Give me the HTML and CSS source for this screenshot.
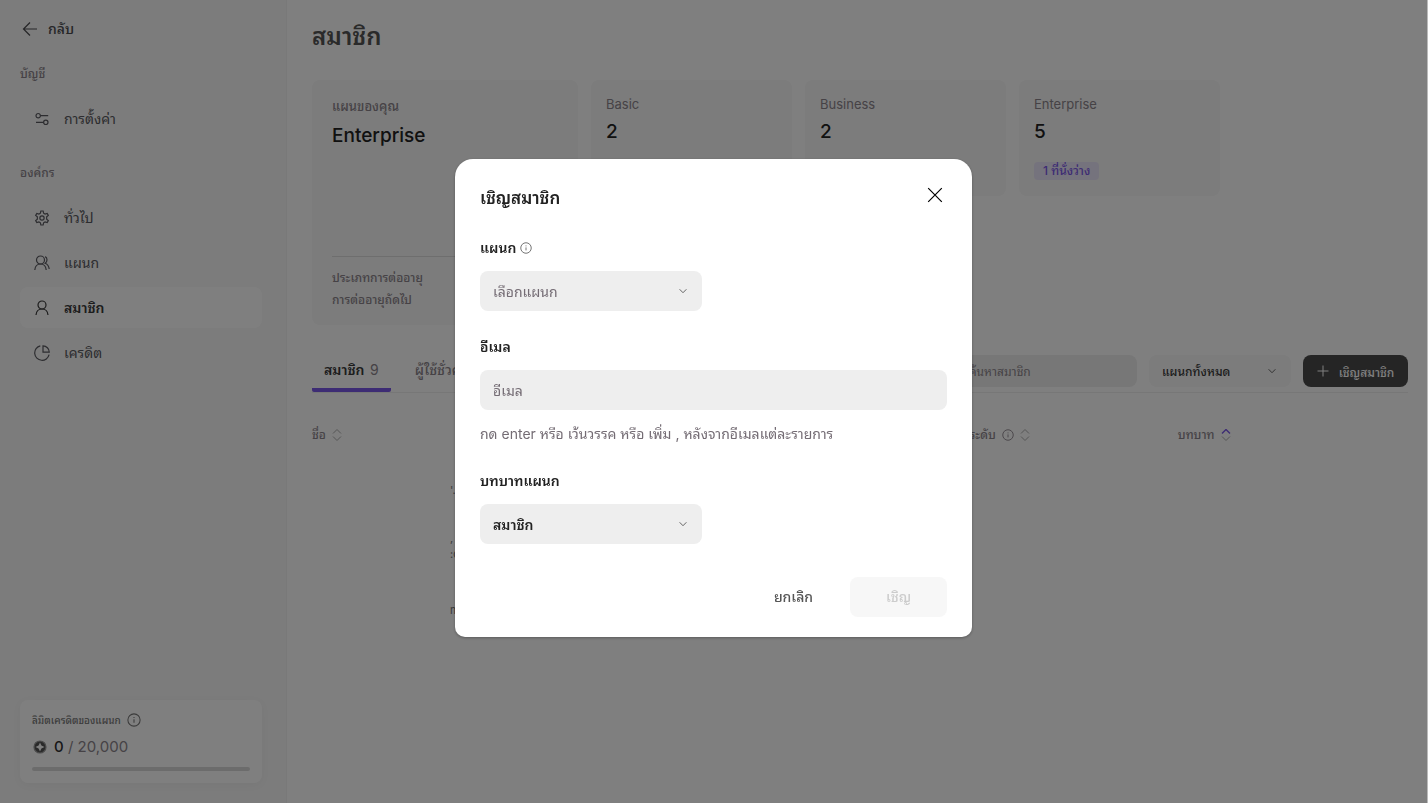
FILE: index.html
```html
<!DOCTYPE html>
<html lang="th">
<head>
<meta charset="utf-8">
<meta name="viewport" content="width=device-width, initial-scale=1">
<title>สมาชิก</title>
<link rel="stylesheet" href="styles.css">
</head>
<body>
<svg class="defs" aria-hidden="true">
  <symbol id="info" viewBox="0 0 16 16"><circle cx="8" cy="8" r="7"/><path d="M8 7.2v4M8 4.6v1.2"/></symbol>
  <symbol id="chevron" viewBox="0 0 16 16"><path d="M3.500 5.700l4.500 4.600 4.500-4.600"/></symbol>
</svg>

<div class="app">
  <aside class="sidebar">
    <a class="back" href="#">
      <svg class="icon-back" viewBox="0 0 16 16"><path d="M15 8H1.500M8 1.500L1.500 8 8 14.500"/></svg>
      <span>กลับ</span>
    </a>
    <h2 class="group-label">บัญชี</h2>
    <nav class="nav">
      <a class="nav-item" href="#">
        <svg class="icon" viewBox="0 0 16 16"><circle cx="4.200" cy="4.700" r="2.200"/><path d="M6.400 4.700H14.200M2 11.300h7.400"/><circle cx="11.800" cy="11.300" r="2.200"/></svg>
        <span>การตั้งค่า</span>
      </a>
    </nav>
    <h2 class="group-label">องค์กร</h2>
    <nav class="nav">
      <a class="nav-item" href="#">
        <svg class="icon icon-gear" viewBox="0 0 24 24"><circle cx="12" cy="12" r="3.200"/><path d="M10.300 1.500h3.400l.7 3.300 2.200 1.250 3.200-1 1.700 2.950-2.500 2.250v3.500l2.500 2.250-1.700 2.950-3.200-1-2.200 1.250-.7 3.300h-3.400l-.7-3.300-2.200-1.250-3.200 1-1.700-2.950 2.500-2.250v-3.500l-2.500-2.250 1.700-2.950 3.200 1 2.200-1.250z"/></svg>
        <span>ทั่วไป</span>
      </a>
      <a class="nav-item" href="#">
        <svg class="icon" viewBox="0 0 16 16"><circle cx="6.500" cy="5" r="4"/><path d="M.8 15c.3-3.500 2.600-6 5.700-6s5.400 2.500 5.700 6M11.200 1.600c2.400 1.200 2.400 5.200 0 6.600 2.300 1 3.700 3 4 5.800"/></svg>
        <span>แผนก</span>
      </a>
      <a class="nav-item active" href="#">
        <svg class="icon" viewBox="0 0 16 16"><circle cx="8" cy="5" r="4"/><path d="M2 15c.3-3.500 2.700-6 6-6s5.700 2.500 6 6"/></svg>
        <span>สมาชิก</span>
      </a>
      <a class="nav-item" href="#">
        <svg class="icon" viewBox="0 0 16 16"><path d="M6.300.9a7.300 7.300 0 1 0 8.800 8.800M9 .8v6.400h6.300A6.600 6.600 0 0 0 9 .8z"/></svg>
        <span>เครดิต</span>
      </a>
    </nav>
    <section class="credit">
      <div class="credit-title">ลิมิตเครดิตของแผนก <svg class="icon-info" viewBox="0 0 16 16"><use href="#info"/></svg></div>
      <div class="credit-value">
        <svg class="coin" viewBox="0 0 14 14"><circle cx="7" cy="7" r="6"/><path d="M7 2.500l1.400 3.100 3.100 1.400-3.100 1.400-1.400 3.100-1.400-3.100-3.100-1.400 3.100-1.400z"/></svg>
        <span><strong>0</strong> / 20,000</span>
      </div>
      <div class="track"></div>
    </section>
  </aside>

  <main class="main">
    <h1 class="title">สมาชิก</h1>
    <div class="cards">
      <section class="card plan">
        <p class="card-label">แผนของคุณ</p>
        <p class="card-value">Enterprise</p>
        <div class="renewal"><p>ประเภทการต่ออายุ</p><p>การต่ออายุถัดไป</p></div>
      </section>
      <section class="card"><p class="card-label">Basic</p><p class="card-value">2</p></section>
      <section class="card"><p class="card-label">Business</p><p class="card-value">2</p></section>
      <section class="card"><p class="card-label">Enterprise</p><p class="card-value">5</p><span class="badge">1 ที่นั่งว่าง</span></section>
    </div>

    <div class="toolbar">
      <div class="tabs">
        <button class="tab selected" type="button">สมาชิก <span>9</span></button>
        <button class="tab" type="button">ผู้ใช้ชั่วคราว</button>
      </div>
      <div class="tools">
        <input class="search" type="search" placeholder="ค้นหาสมาชิก" aria-label="ค้นหาสมาชิก">
        <div class="select-box filter">
          <select aria-label="แผนก"><option>แผนกทั้งหมด</option></select>
          <svg class="chevron" viewBox="0 0 16 16"><use href="#chevron"/></svg>
        </div>
        <button class="invite" type="button"><svg class="icon-plus" viewBox="0 0 12 12"><path d="M6 .5v11M.5 6h11"/></svg>เชิญสมาชิก</button>
      </div>
    </div>

    <table class="members">
      <thead>
        <tr>
          <th class="col-name"><span class="th">ชื่อ <svg class="sort" viewBox="0 0 10 12"><path d="M1 4.500l4-4 4 4M1 7.500l4 4 4-4"/></svg></span></th>
          <th class="col-tier"><span class="th">ระดับ <svg class="th-info" viewBox="0 0 16 16"><use href="#info"/></svg> <svg class="sort" viewBox="0 0 10 12"><path d="M1 4.500l4-4 4 4M1 7.500l4 4 4-4"/></svg></span></th>
          <th><span class="th">บทบาท <svg class="sort" viewBox="0 0 10 12"><path class="on" d="M1 4.500l4-4 4 4"/><path d="M1 7.500l4 4 4-4"/></svg></span></th>
        </tr>
      </thead>
      <tbody>
        <tr><td>'.</td><td></td><td></td></tr>
        <tr><td>,<br>:c</td><td></td><td></td></tr>
        <tr><td><br>m</td><td></td><td></td></tr>
      </tbody>
    </table>
  </main>
</div>

<div class="overlay">
  <form class="dialog" role="dialog" aria-modal="true" aria-labelledby="dialog-title">
    <header class="dialog-head">
      <h2 id="dialog-title">เชิญสมาชิก</h2>
      <button class="close" type="button" aria-label="ปิด"><svg viewBox="0 0 16 16"><path d="M1.200 1.200l13.600 13.600M14.800 1.200L1.200 14.800"/></svg></button>
    </header>
    <div class="field">
      <label for="dept">แผนก <svg class="label-info" viewBox="0 0 16 16"><use href="#info"/></svg></label>
      <div class="select-box half placeholder">
        <select id="dept"><option>เลือกแผนก</option></select>
        <svg class="chevron" viewBox="0 0 16 16"><use href="#chevron"/></svg>
      </div>
    </div>
    <div class="field">
      <label for="email">อีเมล</label>
      <input id="email" type="text" placeholder="อีเมล">
      <p class="hint">กด enter หรือ เว้นวรรค หรือ เพิ่ม , หลังจากอีเมลแต่ละรายการ</p>
    </div>
    <div class="field">
      <label for="role">บทบาทแผนก</label>
      <div class="select-box half">
        <select id="role"><option>สมาชิก</option></select>
        <svg class="chevron" viewBox="0 0 16 16"><use href="#chevron"/></svg>
      </div>
    </div>
    <footer class="actions">
      <button class="cancel" type="button">ยกเลิก</button>
      <button class="submit" type="submit" disabled>เชิญ</button>
    </footer>
  </form>
</div>
</body>
</html>
```

FILE: styles.css
```css
* { box-sizing: border-box; }
body, h1, h2, p { margin: 0; }
body, button, input, select {
  font-family: Inter, "Noto Sans Thai Looped", "Noto Sans Thai", "Noto Sans", sans-serif;
}
body { background: #fff; color: #222; font-size: 14px; line-height: 20px; }
button, input, select { border: 0; padding: 0; background: none; color: inherit; font-size: 14px; }
a { color: inherit; text-decoration: none; }
svg { display: block; flex: none; fill: none; stroke: currentColor; stroke-width: 1.2; }
.defs { position: absolute; width: 0; height: 0; }

.app { display: flex; min-height: 100vh; }

/* Sidebar */
.sidebar {
  flex: none; display: flex; flex-direction: column;
  width: 287px; padding: 16px 24px 20px 20px;
  background: #f8f8f8; border-right: 1px solid #f2f2f2;
}
.back { display: flex; align-items: center; gap: 10px; height: 26px; padding-left: 2px; font-weight: 500; color: #4c4c50; }
.icon-back { width: 16px; height: 16px; }
.group-label { margin-top: 22px; font-size: 12px; line-height: 20px; font-weight: 500; color: #8c858c; }
.nav { display: flex; flex-direction: column; gap: 4px; margin-top: 14px; }
.nav + .group-label { margin-top: 24px; }
.nav-item { display: flex; align-items: center; gap: 14px; height: 41px; padding: 0 14px; border-radius: 8px; color: #5a5a60; }
.nav-item.active { background: #fff; font-weight: 600; color: #3a3a3a; }
.icon { width: 16px; height: 16px; }
.icon-gear { stroke-width: 1.8; }
.credit { margin-top: auto; padding: 10px 12px 12px; border-radius: 8px; background: #fff; box-shadow: 0 2px 10px rgba(0, 0, 0, .04); }
.credit-title { display: flex; align-items: center; gap: 6px; font-size: 10px; font-weight: 500; color: #777; }
.icon-info { width: 14px; height: 14px; }
.credit-value { display: flex; align-items: center; gap: 7px; height: 34px; margin-bottom: 3px; padding-left: 1px; font-size: 15px; color: #8c858c; }
.credit-value strong { font-weight: 500; color: #333; }
.coin { width: 14px; height: 14px; stroke: #999; fill: #555; }
.coin path { fill: #fff; stroke: none; }
.track { height: 4px; border-radius: 2px; background: #d8d8d8; }

/* Main column */
.main { flex: 1; min-width: 0; padding: 20px 20px 20px 25px; }
.title { font-size: 24px; line-height: 34px; font-weight: 600; color: #555; }
.cards { display: grid; grid-template-columns: 266px repeat(3, 201px); align-items: start; gap: 13px; margin-top: 26px; }
.card { min-height: 116px; padding: 14px 15px; border-radius: 8px; background: #f8f8f8; }
.card-label { font-size: 13px; color: #8c858c; }
.card-value { margin-top: 4px; font-size: 19px; line-height: 28px; font-weight: 500; }
.plan { display: flex; flex-direction: column; min-height: 245px; padding: 16px 20px 14px; }
.plan .card-label { font-weight: 500; }
.plan .card-value { margin-top: 6px; }
.renewal { margin-top: auto; padding-top: 10px; border-top: 1px solid #ddd; font-size: 12px; line-height: 22px; font-weight: 500; color: #8c858c; }
.badge { display: inline-block; margin-top: 16px; padding: 0 9px; border-radius: 4px; background: #ebe6fa; color: #7b58e8; font-size: 12px; line-height: 18px; font-weight: 500; }

.toolbar { display: flex; justify-content: space-between; margin-top: 26px; border-bottom: 1px solid #eee; }
.tabs { display: flex; gap: 12px; }
.tab { height: 41px; padding: 0 12px 2px; font-weight: 500; color: #8c858c; border-bottom: 4px solid transparent; }
.tab.selected { font-weight: 600; color: #3a3a3a; border-bottom-color: #7b58e8; border-radius: 2px; }
.tab span { margin-left: 2px; font-weight: 400; color: #8c858c; }
.tools { display: flex; gap: 12px; padding-top: 4px; height: 36px; }
.search { width: 198px; padding: 0 30px; border-radius: 8px; background: #eee; font-size: 12px; }
input::placeholder { color: #746c74; opacity: 1; }
.search::placeholder { color: #8c858c; }
.select-box { position: relative; border-radius: 8px; background: #eee; }
.select-box select { appearance: none; width: 100%; height: 100%; padding: 0 40px 0 13px; border-radius: 8px; font-weight: 500; }
.chevron { position: absolute; top: 50%; right: 13px; width: 12px; height: 12px; margin-top: -6px; color: #555; pointer-events: none; }
.filter { width: 142px; background: #f8f8f8; }
.filter select { font-size: 12px; color: #3a3a3a; }
.invite { display: flex; align-items: center; justify-content: center; gap: 10px; width: 105px; border-radius: 8px; background: #4a4a4a; color: #fff; font-size: 12px; font-weight: 500; }
.icon-plus { width: 12px; height: 12px; stroke-width: 1; }

.members { width: 100%; margin-top: 27px; border-collapse: collapse; table-layout: fixed; }
.members th { padding: 0 0 12px; text-align: left; font-size: 12px; line-height: 30px; font-weight: 500; color: #8c858c; }
.col-name { width: 60%; }
.col-tier { width: 19%; }
.th { display: flex; align-items: center; gap: 6px; }
.th-info { width: 12px; height: 12px; }
.sort { width: 10px; height: 12px; color: #aaa; stroke-width: 1; }
.sort .on { stroke: #7b58e8; stroke-width: 1.4; }
.members td { height: 56px; padding: 0 0 0 138px; font-size: 11px; line-height: 16px; color: #777; }

/* Invite dialog */
.overlay {
  position: fixed; inset: 0; display: flex; align-items: center; justify-content: center;
  padding-bottom: 7px; background: rgba(0, 0, 0, .5); border-right: 1px solid #bbb;
}
.dialog {
  display: flex; flex-direction: column; gap: 26px;
  width: 517px; max-width: 100%; padding: 24px 25px 20px;
  border-radius: 18px 18px 10px 10px; background: #fff; box-shadow: 0 1px 3px rgba(0, 0, 0, .3);
}
.dialog-head { display: flex; align-items: flex-start; justify-content: space-between; height: 29px; }
.dialog-head h2 { font-size: 17px; line-height: 30px; font-weight: 600; }
.close { width: 24px; height: 24px; padding: 4px; color: #000; }
.field { display: flex; flex-direction: column; }
.field label { display: flex; align-items: center; gap: 4px; margin-bottom: 13px; line-height: 20px; font-weight: 600; }
.label-info { width: 12px; height: 12px; color: #666; }
.field input { height: 40px; padding: 0 13px; border-radius: 8px; background: #eee; }
.half { width: 222px; height: 40px; }
.half select { font-weight: 600; }
.placeholder select { font-weight: 400; color: #746c74; }
.hint { margin-top: 13px; line-height: 22px; color: #746c74; }
.actions { display: flex; justify-content: flex-end; gap: 12px; margin-top: 7px; }
.actions button { height: 40px; padding-bottom: 3px; border-radius: 8px; font-weight: 500; }
.cancel { width: 89px; color: #555; }
.submit { width: 97px; background: #f7f7f7; color: #ccc; }
```
